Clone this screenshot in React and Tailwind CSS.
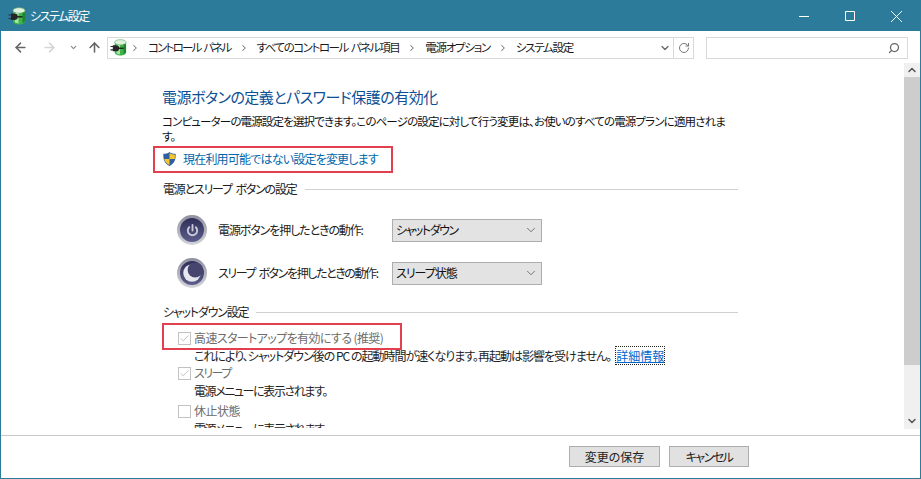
import React from 'react';
import { ArrowLeft, ArrowRight, ArrowUp, ChevronDown, ChevronRight, ChevronUp, RotateCw, Search, Check } from 'lucide-react';

const PowerPlugIcon = ({ className }) => (
  <svg viewBox="0 0 18 18" className={className}>
    <path d="M5 3.500h12v10.500c0 2-2.500 3.500-6 3.500s-6-1.500-6-3.500z" fill="#3fb24a" />
    <ellipse cx="11" cy="3.500" rx="6" ry="2.800" fill="#dff3dc" stroke="#6aa86f" strokeWidth="0.7" />
    <path d="M7 6h3.500v10.500L7 15.500z" fill="#a5e8a1" />
    <path d="M14.500 5.500H17V14l-2.500 2.500z" fill="#1f8330" />
    <path d="M0.500 8h3M0.500 11.500h3" stroke="#333" strokeWidth="1.200" />
    <path d="M3 6.500h3.500a3.200 3.200 0 0 1 0 6.500H3z" fill="#262626" />
    <path d="M9 9.800h5.500" stroke="#1d1d1d" strokeWidth="1.400" />
  </svg>
);

const Shield = () => (
  <svg viewBox="0 0 16 16" className="w-[15px] h-[16px] shrink-0">
    <path d="M8 .5c2 1.500 4 2 6.500 2 .4 6-1 10.500-6.500 13C2.500 13 1.100 8.500 1.500 2.500 4 2.500 6 2 8 .5z" fill="#2f5f9e" />
    <path d="M8 1.500V8h5.700c.2-1.500.1-3.200 0-4.700C11.600 3.200 9.700 2.700 8 1.500z" fill="#f5c431" />
    <path d="M8 8v6.500C5 13 3 11 2.400 8z" fill="#f5c431" />
  </svg>
);

const Orb = ({ children }) => (
  <div className="w-[30px] h-[30px] shrink-0 rounded-full bg-gradient-to-b from-[#8f8fa0] to-[#d4d4da] flex items-center justify-center">
    <div className="w-[24px] h-[24px] rounded-full bg-gradient-to-b from-[#2f2f58] to-[#5d5d8c] flex items-center justify-center">
      {children}
    </div>
  </div>
);

const SelectBox = ({ value, spacing }) => (
  <div className="w-[150px] h-[23px] shrink-0 ml-auto bg-[#e3e3e3] border border-[#adadad] flex items-center justify-between pl-[3px] pr-[3px] text-[12px] text-[#111]">
    <span className={spacing}>{value}</span>
    <ChevronDown className="w-[14px] h-[14px] text-[#444]" strokeWidth={1.2} />
  </div>
);

const GroupTitle = ({ children }) => (
  <div className="flex items-center gap-[8px] pl-px text-[12px] leading-[16px] text-[#222]">
    <span className="tracking-[-1.2px] [word-spacing:2px] whitespace-nowrap">{children}</span>
    <div className="flex-1 h-px bg-[#d0d0d0]" />
  </div>
);

const CheckRow = ({ checked, label, spacing }) => (
  <div className="flex items-center gap-[3px] text-[12px] leading-[18px] text-[#6d6d6d]">
    <div className="w-[13px] h-[13px] border border-[#c2c2c2] bg-white flex items-center justify-center">
      {checked && <Check className="w-[11px] h-[11px] text-[#a8a8a8]" strokeWidth={1.5} />}
    </div>
    <span className={`${spacing} whitespace-nowrap`}>{label}</span>
  </div>
);

const Crumb = ({ children, spacing = 'tracking-[-1.3px]' }) => (
  <>
    <ChevronRight className="w-[10px] h-[10px] text-[#777] shrink-0" strokeWidth={2.5} />
    <span className={`${spacing} [word-spacing:2px] text-[#1a1a1a] whitespace-nowrap`}>{children}</span>
  </>
);

export default function App() {
  return (
    <div
      className="w-[921px] h-[479px] flex flex-col bg-white border border-[#2d7b9b] overflow-hidden [font-feature-settings:'palt'] font-['Noto_Sans_CJK_JP','Noto_Sans',sans-serif]"
    >
      {/* title bar */}
      <div className="h-[30px] shrink-0 bg-[#2d7b9b] flex items-center text-white text-[12px]">
        <PowerPlugIcon className="w-[18px] h-[18px] ml-[7px]" />
        <span className="ml-[4px] tracking-[-1.5px]">システム設定</span>
        <div className="ml-auto flex items-center pr-[1px]">
          <div className="w-[46px] flex justify-center">
            <svg viewBox="0 0 10 10" className="w-[10px] h-[10px]" stroke="white" fill="none"><path d="M0 5.500h10" /></svg>
          </div>
          <div className="w-[46px] flex justify-center">
            <svg viewBox="0 0 10 10" className="w-[10px] h-[10px]" stroke="white" fill="none"><path d="M.5.500h9v9h-9z" /></svg>
          </div>
          <div className="w-[46px] flex justify-center">
            <svg viewBox="0 0 10 10" className="w-[11px] h-[11px]" stroke="white" strokeWidth="0.9" fill="none"><path d="M0 0l10 10M10 0L0 10" /></svg>
          </div>
        </div>
      </div>

      {/* address bar */}
      <div className="h-[32px] shrink-0 flex items-center pt-[1px]">
        <ArrowLeft className="w-[15px] h-[15px] ml-[12px] text-[#666]" strokeWidth={2.5} />
        <ArrowRight className="w-[15px] h-[15px] ml-[14px] text-[#d4d4d4]" strokeWidth={2.5} />
        <ChevronDown className="w-[9px] h-[9px] ml-[12px] text-[#888]" strokeWidth={3} />
        <ArrowUp className="w-[15px] h-[15px] ml-[9px] text-[#666]" strokeWidth={2.5} />
        <div className="w-[587px] h-[22px] ml-[5px] border border-[#d9d9d9] flex items-center text-[11.5px]">
          <PowerPlugIcon className="w-[17px] h-[17px] ml-[2px] shrink-0" />
          <div className="flex items-center gap-[8px] ml-[3px]">
            <Crumb spacing="tracking-[-1.8px]">コントロール パネル</Crumb>
            <Crumb spacing="tracking-[-1.45px]">すべてのコントロール パネル項目</Crumb>
            <Crumb>電源オプション</Crumb>
            <Crumb>システム設定</Crumb>
          </div>
          <ChevronDown className="w-[12px] h-[12px] ml-auto mr-[2px] text-[#666]" strokeWidth={2.5} />
          <div className="w-[20px] h-full border-l border-[#d9d9d9] flex items-center justify-center">
            <RotateCw className="w-[12px] h-[12px] text-[#777]" strokeWidth={2} />
          </div>
        </div>
        <div className="w-[202px] h-[22px] ml-[12px] border border-[#d9d9d9] flex items-center justify-end pr-[7px]">
          <Search className="w-[12px] h-[12px] text-[#666] -scale-x-100" strokeWidth={2.5} />
        </div>
      </div>

      {/* body */}
      <div className="flex-1 min-h-0 flex items-start">
        <div className="flex-1 min-w-0 h-[365px] overflow-hidden pl-[161px] pr-[166px] pt-[22px]">
          <h1 className="text-[15px] leading-[24px] font-normal text-[#0d4f94] whitespace-nowrap tracking-[-0.5px]">
            電源ボタンの定義とパスワード保護の有効化
          </h1>
          <p className="mt-[5px] text-[11.5px] leading-[15px] text-[#111] whitespace-nowrap tracking-[-0.85px]">
            コンピューターの電源設定を選択できます。このページの設定に対して行う変更は、お使いのすべての電源プランに適用されま
            <br />
            す。
          </p>
          <div className="relative mt-[6px] flex items-center gap-[6px] text-[12px] leading-[18px] text-[#0066aa]">
            <Shield />
            <span className="tracking-[-0.8px]">現在利用可能ではない設定を変更します</span>
            <div className="absolute left-[-9px] top-[-4px] w-[240px] h-[27px] border-2 border-[#e2404f]" />
          </div>

          <div className="mt-[13px]">
            <GroupTitle>電源とスリープ ボタンの設定</GroupTitle>
          </div>
          <div className="mt-[18px] ml-[15px] w-[365px] flex flex-col gap-[13px] text-[12px] text-[#222]">
            <div className="flex items-center gap-[11px]">
              <Orb>
                <svg viewBox="0 0 16 16" className="w-[15px] h-[15px]" fill="none" stroke="#c9c9d8" strokeWidth="2" strokeLinecap="round">
                  <path d="M8 2v6" />
                  <path d="M4.500 4.500a5 5 0 1 0 7 0" />
                </svg>
              </Orb>
              <span className="whitespace-nowrap tracking-[-1.1px]">電源ボタンを押したときの動作:</span>
              <SelectBox value="シャットダウン" spacing="tracking-[-1.5px]" />
            </div>
            <div className="flex items-center gap-[11px]">
              <Orb>
                <svg viewBox="0 0 16 16" className="w-[20px] h-[20px]">
                  <circle cx="8" cy="8" r="7" fill="#e6e6ee" />
                  <circle cx="10.500" cy="5.500" r="6" fill="#45456f" />
                </svg>
              </Orb>
              <span className="whitespace-nowrap tracking-[-1.4px] [word-spacing:2px]">スリープ ボタンを押したときの動作:</span>
              <SelectBox value="スリープ状態" spacing="tracking-[-1px]" />
            </div>
          </div>

          <div className="mt-[16px]">
            <GroupTitle>シャットダウン設定</GroupTitle>
          </div>
          <div className="mt-[9px] pl-[16px]">
            <div className="relative">
              <CheckRow checked label="高速スタートアップを有効にする (推奨)" spacing="tracking-[-0.6px]" />
              <div className="absolute left-[-16px] top-[-6px] w-[240px] h-[27px] border-2 border-[#e2404f]" />
            </div>
            <p className="pl-[16px] text-[12px] leading-[17px] text-[#222] whitespace-nowrap">
              <span className="tracking-[-1px]">これにより、シャットダウン後の PC の起動時間が速くなります。再起動は影響を受けません。</span>
              <span className="ml-[5px] text-[#0066cc] underline outline-1 outline-dotted outline-[#222]">詳細情報</span>
            </p>
            <CheckRow checked label="スリープ" spacing="tracking-[-1.5px]" />
            <p className="pl-[16px] text-[12px] leading-[17px] text-[#222] tracking-[-1.4px]">電源メニューに表示されます。</p>
            <div className="mt-[3px]"><CheckRow label="休止状態" spacing="tracking-[-0.5px]" /></div>
            <p className="pl-[16px] text-[12px] leading-[17px] text-[#222] tracking-[-1.4px]">電源メニューに表示されます。</p>
          </div>
        </div>

        {/* scrollbar */}
        <div className="w-[16px] h-[366px] shrink-0 bg-[#f0f0f0] flex flex-col items-center">
          <div className="h-[14px] flex items-center"><ChevronUp className="w-[12px] h-[12px] text-[#555]" strokeWidth={3} /></div>
          <div className="w-full h-[288px] bg-[#cdcdcd]" />
          <div className="mt-auto h-[16px] flex items-center"><ChevronDown className="w-[12px] h-[12px] text-[#555]" strokeWidth={3} /></div>
        </div>
      </div>

      {/* footer */}
      <div className="h-[43px] shrink-0 border-t border-[#c8c8c8] flex items-center justify-end gap-[9px] pr-[171px] pb-[1px]">
        <button className="w-[91px] h-[21px] bg-[#e1e1e1] border border-[#adadad] text-[12px] leading-none text-[#222]">変更の保存</button>
        <button className="w-[80px] h-[21px] bg-[#e1e1e1] border border-[#adadad] text-[12px] leading-none text-[#222] tracking-[-1.5px]">キャンセル</button>
      </div>
    </div>
  );
}
